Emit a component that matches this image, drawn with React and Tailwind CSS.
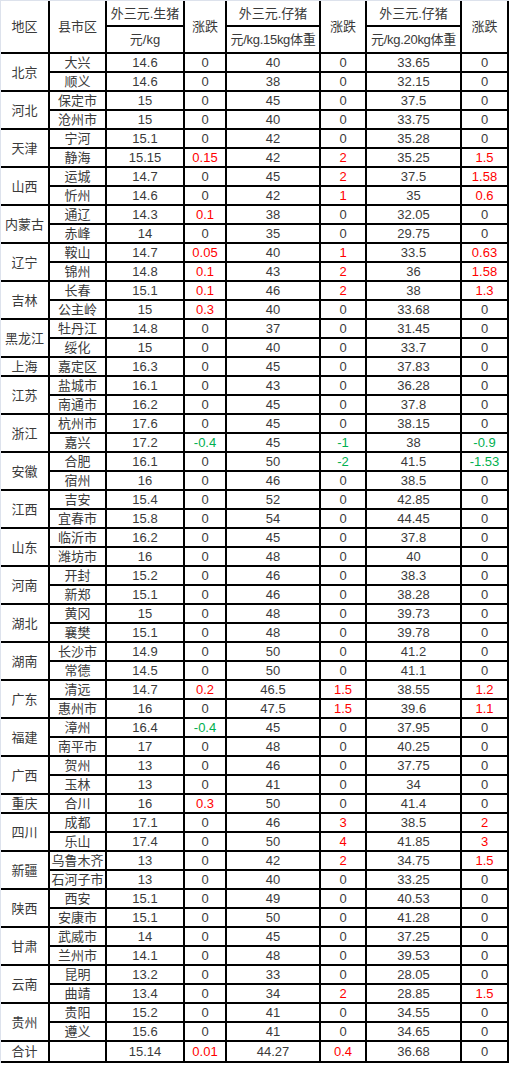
import React from "react";

// [province, [city, price, chg, p15, chg15, p20, chg20] ...]
const groups = [
  ["北京", [["大兴", "14.6", "0", "40", "0", "33.65", "0"], ["顺义", "14.6", "0", "38", "0", "32.15", "0"]]],
  ["河北", [["保定市", "15", "0", "45", "0", "37.5", "0"], ["沧州市", "15", "0", "40", "0", "33.75", "0"]]],
  ["天津", [["宁河", "15.1", "0", "42", "0", "35.28", "0"], ["静海", "15.15", "0.15", "42", "2", "35.25", "1.5"]]],
  ["山西", [["运城", "14.7", "0", "45", "2", "37.5", "1.58"], ["忻州", "14.6", "0", "42", "1", "35", "0.6"]]],
  ["内蒙古", [["通辽", "14.3", "0.1", "38", "0", "32.05", "0"], ["赤峰", "14", "0", "35", "0", "29.75", "0"]]],
  ["辽宁", [["鞍山", "14.7", "0.05", "40", "1", "33.5", "0.63"], ["锦州", "14.8", "0.1", "43", "2", "36", "1.58"]]],
  ["吉林", [["长春", "15.1", "0.1", "46", "2", "38", "1.3"], ["公主岭", "15", "0.3", "40", "0", "33.68", "0"]]],
  ["黑龙江", [["牡丹江", "14.8", "0", "37", "0", "31.45", "0"], ["绥化", "15", "0", "40", "0", "33.7", "0"]]],
  ["上海", [["嘉定区", "16.3", "0", "45", "0", "37.83", "0"]]],
  ["江苏", [["盐城市", "16.1", "0", "43", "0", "36.28", "0"], ["南通市", "16.2", "0", "45", "0", "37.8", "0"]]],
  ["浙江", [["杭州市", "17.6", "0", "45", "0", "38.15", "0"], ["嘉兴", "17.2", "-0.4", "45", "-1", "38", "-0.9"]]],
  ["安徽", [["合肥", "16.1", "0", "50", "-2", "41.5", "-1.53"], ["宿州", "16", "0", "46", "0", "38.5", "0"]]],
  ["江西", [["吉安", "15.4", "0", "52", "0", "42.85", "0"], ["宜春市", "15.8", "0", "54", "0", "44.45", "0"]]],
  ["山东", [["临沂市", "16.2", "0", "45", "0", "37.8", "0"], ["潍坊市", "16", "0", "48", "0", "40", "0"]]],
  ["河南", [["开封", "15.2", "0", "46", "0", "38.3", "0"], ["新郑", "15.1", "0", "46", "0", "38.28", "0"]]],
  ["湖北", [["黄冈", "15", "0", "48", "0", "39.73", "0"], ["襄樊", "15.1", "0", "48", "0", "39.78", "0"]]],
  ["湖南", [["长沙市", "14.9", "0", "50", "0", "41.2", "0"], ["常德", "14.5", "0", "50", "0", "41.1", "0"]]],
  ["广东", [["清远", "14.7", "0.2", "46.5", "1.5", "38.55", "1.2"], ["惠州市", "16", "0", "47.5", "1.5", "39.6", "1.1"]]],
  ["福建", [["漳州", "16.4", "-0.4", "45", "0", "37.95", "0"], ["南平市", "17", "0", "48", "0", "40.25", "0"]]],
  ["广西", [["贺州", "13", "0", "46", "0", "37.75", "0"], ["玉林", "13", "0", "41", "0", "34", "0"]]],
  ["重庆", [["合川", "16", "0.3", "50", "0", "41.4", "0"]]],
  ["四川", [["成都", "17.1", "0", "46", "3", "38.5", "2"], ["乐山", "17.4", "0", "50", "4", "41.85", "3"]]],
  ["新疆", [["乌鲁木齐", "13", "0", "42", "2", "34.75", "1.5"], ["石河子市", "13", "0", "40", "0", "33.25", "0"]]],
  ["陕西", [["西安", "15.1", "0", "49", "0", "40.53", "0"], ["安康市", "15.1", "0", "50", "0", "41.28", "0"]]],
  ["甘肃", [["武威市", "14", "0", "45", "0", "37.25", "0"], ["兰州市", "14.1", "0", "48", "0", "39.53", "0"]]],
  ["云南", [["昆明", "13.2", "0", "33", "0", "28.05", "0"], ["曲靖", "13.4", "0", "34", "2", "28.85", "1.5"]]],
  ["贵州", [["贵阳", "15.2", "0", "41", "0", "34.55", "0"], ["遵义", "15.6", "0", "41", "0", "34.65", "0"]]],
];

const cell = "border-2 border-black text-center align-middle p-0 whitespace-nowrap";

function Change({ v }) {
  let color = "text-[#3a3a3a]";
  if (v.startsWith("-")) color = "text-[#00b050]";
  else if (v !== "0") color = "text-[#ff0000]";
  return <td className={`${cell} ${color}`}>{v}</td>;
}

export default function App() {
  return (
    <div
      className="w-fit bg-[#dde2ec] pt-px pl-px text-[13px] leading-none text-[#3a3a3a]"
      style={{ fontFamily: '"Liberation Sans", "Noto Sans CJK SC", sans-serif' }}
    >
      <table className="table-fixed border-collapse bg-white">
        <colgroup>
          <col className="w-[48px]" />
          <col className="w-[57px]" />
          <col className="w-[78px]" />
          <col className="w-[42px]" />
          <col className="w-[94px]" />
          <col className="w-[46px]" />
          <col className="w-[95px]" />
          <col className="w-[47px]" />
        </colgroup>
        <thead>
          <tr className="h-[25px]">
            <th rowSpan={2} className={`${cell} font-normal border-l-0 border-t-0`}>地区</th>
            <th rowSpan={2} className={`${cell} font-normal border-t-0`}>县市区</th>
            <th className={`${cell} font-normal border-t-0`}>外三元.生猪</th>
            <th rowSpan={2} className={`${cell} font-normal border-t-0`}>涨跌</th>
            <th className={`${cell} font-normal border-t-0`}>外三元.仔猪</th>
            <th rowSpan={2} className={`${cell} font-normal border-t-0`}>涨跌</th>
            <th className={`${cell} font-normal border-t-0`}>外三元.仔猪</th>
            <th rowSpan={2} className={`${cell} font-normal border-t-0`}>涨跌</th>
          </tr>
          <tr className="h-[27px]">
            <th className={`${cell} font-normal`}>元/kg</th>
            <th className={`${cell} font-normal tracking-[-0.3px]`}>元/kg.15kg体重</th>
            <th className={`${cell} font-normal tracking-[-0.3px]`}>元/kg.20kg体重</th>
          </tr>
        </thead>
        <tbody>
          {groups.map(([prov, rows]) =>
            rows.map((r, i) => (
              <tr key={prov + r[0]} className="h-[19px]">
                {i === 0 && (
                  <td rowSpan={rows.length} className={`${cell} border-l-0`}>
                    {prov}
                  </td>
                )}
                <td className={cell}>{r[0]}</td>
                <td className={cell}>{r[1]}</td>
                <Change v={r[2]} />
                <td className={cell}>{r[3]}</td>
                <Change v={r[4]} />
                <td className={cell}>{r[5]}</td>
                <Change v={r[6]} />
              </tr>
            ))
          )}
          <tr className="h-[21px]">
            <td className={`${cell} border-l-0`}>合计</td>
            <td className={cell}></td>
            <td className={cell}>15.14</td>
            <Change v="0.01" />
            <td className={cell}>44.27</td>
            <Change v="0.4" />
            <td className={cell}>36.68</td>
            <Change v="0" />
          </tr>
        </tbody>
      </table>
    </div>
  );
}
